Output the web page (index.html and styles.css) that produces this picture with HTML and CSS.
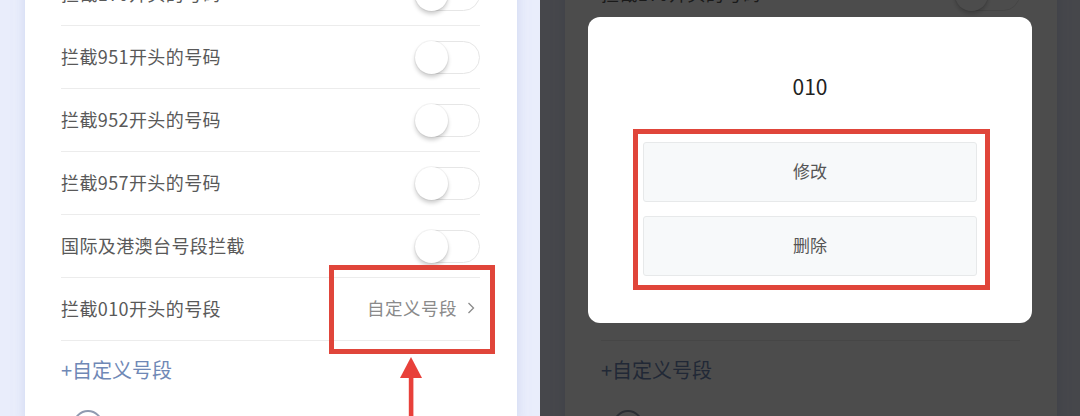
FILE: index.html
```html
<!DOCTYPE html>
<html lang="zh-CN">
<head>
  <meta charset="UTF-8">
  <meta name="viewport" content="width=device-width, initial-scale=1.0">
  <title>号段拦截</title>
  <link rel="stylesheet" href="styles.css">
</head>
<body>

  <!-- 左：设置列表 -->
  <div class="panel">
    <div class="card">
      <div class="row"><span>拦截170开头的号码</span><i class="switch"></i></div>
      <div class="row"><span>拦截951开头的号码</span><i class="switch"></i></div>
      <div class="row"><span>拦截952开头的号码</span><i class="switch"></i></div>
      <div class="row"><span>拦截957开头的号码</span><i class="switch"></i></div>
      <div class="row"><span>国际及港澳台号段拦截</span><i class="switch"></i></div>
      <div class="row">
        <span>拦截010开头的号段</span>
        <span class="more">自定义号段
          <svg width="8" height="12" viewBox="0 0 8 12"><polyline points="1.5,1 6.5,6 1.5,11" fill="none" stroke="#8a8a8a" stroke-width="1.3"/></svg>
        </span>
      </div>
      <div class="add">+自定义号段</div>
      <div class="next"><i class="circle"></i></div>
    </div>

    <div class="mark mark-left"></div>
    <svg class="arrow" width="26" height="60" viewBox="0 0 26 60">
      <polygon points="13,0 2,21 24,21" fill="#e8403a"/>
      <rect x="10.8" y="20" width="4.6" height="40" fill="#e8403a"/>
    </svg>
  </div>

  <!-- 右：弹窗 -->
  <div class="panel">
    <div class="card">
      <div class="row"><span>拦截170开头的号码</span><i class="switch"></i></div>
      <div class="row"><span>拦截951开头的号码</span><i class="switch"></i></div>
      <div class="row"><span>拦截952开头的号码</span><i class="switch"></i></div>
      <div class="row"><span>拦截957开头的号码</span><i class="switch"></i></div>
      <div class="row"><span>国际及港澳台号段拦截</span><i class="switch"></i></div>
      <div class="row"><span>拦截010开头的号段</span><span class="more">自定义号段</span></div>
      <div class="add">+自定义号段</div>
      <div class="next"><i class="circle"></i></div>
    </div>

    <div class="mask"></div>

    <div class="dialog">
      <div class="dialog-title">010</div>
      <div class="actions">
        <div class="btn">修改</div>
        <div class="btn">删除</div>
      </div>
      <div class="mark mark-dialog"></div>
    </div>
  </div>

</body>
</html>
```

FILE: styles.css
```css
* {
  box-sizing: border-box;
}

body {
  margin: 0;
  display: flex;
  width: 1080px;
  height: 416px;
  overflow: hidden;
  font-family: "Noto Sans CJK SC", "Noto Sans", sans-serif;
}

.panel {
  position: relative;
  width: 540px;
  height: 416px;
  overflow: hidden;
  background: #e9edfb;
  padding-left: 25px;
}

.card {
  width: 492px;
  height: 460px;
  margin-top: -37px;
  background: #fff;
  padding: 0 37px 0 36px;
  box-shadow: 0 0 10px rgba(190, 200, 235, 0.6);
}

.row {
  display: flex;
  align-items: center;
  justify-content: space-between;
  height: 63px;
  border-bottom: 1px solid #ececec;
  font-size: 18px;
  letter-spacing: 0.4px;
  color: #595959;
}

.row > span:first-child {
  margin-top: -3px;
}

.switch {
  position: relative;
  width: 65px;
  height: 33px;
  border: 1px solid #e6e6e6;
  border-radius: 17px;
  background: #fff;
}

.switch::before {
  content: "";
  position: absolute;
  left: -1px;
  top: -1px;
  width: 33px;
  height: 33px;
  border-radius: 50%;
  background: #fff;
  box-shadow: 0 3px 4px rgba(0, 0, 0, 0.2), 0 0 0 1px rgba(0, 0, 0, 0.04);
}

.more {
  display: flex;
  align-items: center;
  gap: 10px;
  padding-right: 5px;
  margin-top: -3px;
  font-size: 17.5px;
  letter-spacing: 0.5px;
  color: #8a8a8a;
}

.add {
  display: flex;
  align-items: center;
  height: 60px;
  padding-bottom: 4px;
  font-size: 20px;
  color: #6f88b6;
}

.next {
  padding: 9px 0 0 12px;
}

.circle {
  display: block;
  width: 30px;
  height: 30px;
  border: 2px solid #8f9ab0;
  border-radius: 50%;
}

/* 红色标注框 */
.mark {
  position: absolute;
  border: 5px solid #e0453a;
}

.mark-left {
  left: 329px;
  top: 265px;
  width: 166px;
  height: 89px;
}

.arrow {
  position: absolute;
  left: 398px;
  top: 357px;
}

.mask {
  position: absolute;
  left: 0;
  top: 0;
  right: 0;
  bottom: 0;
  background: rgba(0, 0, 0, 0.7);
}

.dialog {
  position: absolute;
  left: 48px;
  top: 17px;
  width: 444px;
  padding: 52px 55px 47px;
  background: #fff;
  border-radius: 12px;
}

.dialog-title {
  height: 34px;
  line-height: 34px;
  margin-bottom: 39px;
  text-align: center;
  font-size: 21px;
  color: #222;
}

.actions {
  display: flex;
  flex-direction: column;
  gap: 14px;
}

.btn {
  height: 60px;
  line-height: 56px;
  text-align: center;
  font-size: 17px;
  color: #555;
  background: #f7f9fa;
  border: 1px solid #e7e9ea;
  border-radius: 3px;
}

.mark-dialog {
  left: 45px;
  top: 112px;
  width: 357px;
  height: 161px;
}
```
